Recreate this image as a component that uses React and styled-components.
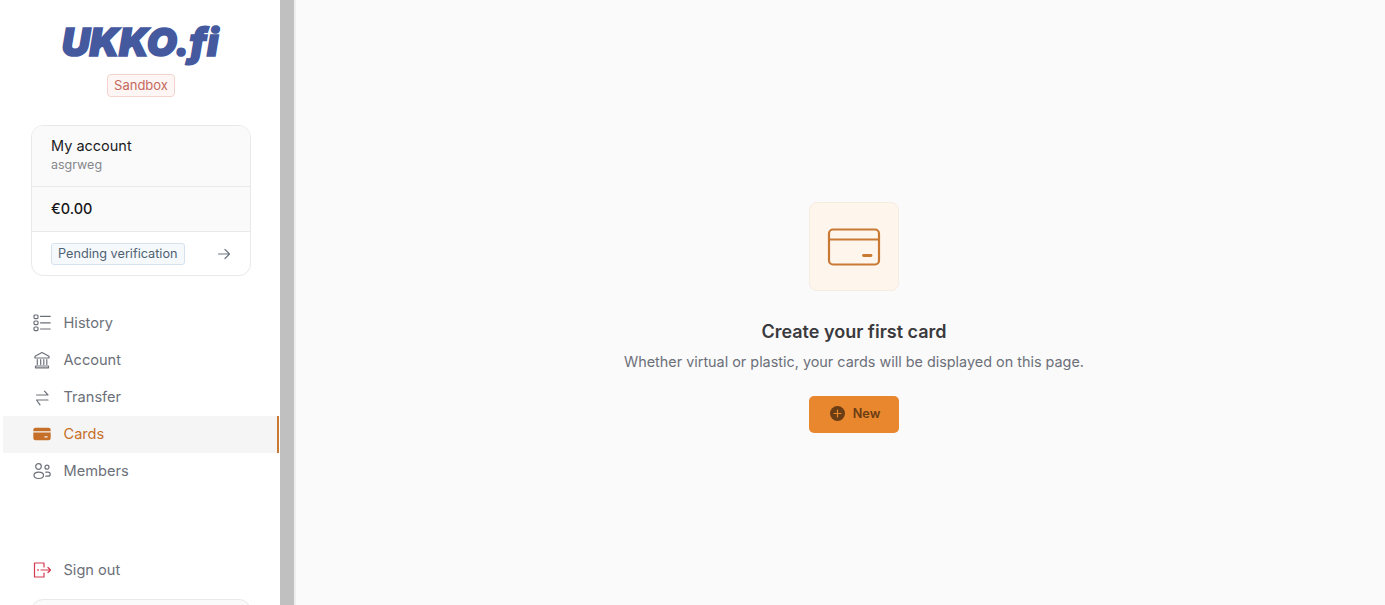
import React from 'react';
import styled, { createGlobalStyle } from 'styled-components';

const Global = createGlobalStyle`
  html, body { margin: 0; height: 100%; overflow: hidden; background: #fafafa; }
  body { font-family: Inter, "Liberation Sans", sans-serif; }
  #root { height: 100%; }
`;

const navItems = [
  { label: 'History', icon: <HistoryIcon /> },
  { label: 'Account', icon: <BankIcon /> },
  { label: 'Transfer', icon: <TransferIcon /> },
  { label: 'Cards', icon: <CardFillIcon />, active: true },
  { label: 'Members', icon: <MembersIcon /> },
];

function Svg({ children, size = 18, color = 'currentColor' }) {
  return (
    <svg width={size} height={size} viewBox="0 0 18 18" fill="none" stroke={color} strokeWidth="1.2" strokeLinecap="round" strokeLinejoin="round">
      {children}
    </svg>
  );
}

function HistoryIcon() {
  return (
    <Svg>
      <rect x="1" y="1" width="4" height="3.6" rx="1" />
      <rect x="1" y="7" width="4" height="3.6" rx="1" />
      <rect x="1" y="13" width="4" height="3.6" rx="1" />
      <path d="M7.5 2.4H17.2M7.5 8.8H17.2M7.5 15H17.2" />
    </Svg>
  );
}

function BankIcon() {
  return (
    <Svg>
      <path d="M9 1.5L16 5.2V7H2V5.2L9 1.5Z" />
      <path d="M4.3 8.5V13.5M7.7 8.5V13.5M10.8 8.5V13.5M13.8 8.5V13.5" />
      <path d="M2.5 15H15.5V16.8H2.5Z" />
    </Svg>
  );
}

function TransferIcon() {
  return (
    <Svg>
      <path d="M3.5 7H15L11.5 3.2" />
      <path d="M15 12H3.5L7 16.8" />
    </Svg>
  );
}

function CardFillIcon() {
  return (
    <svg width="18" height="18" viewBox="0 0 18 18">
      <path fill="#c66f28" d="M2.5 2.8H15.5A2.2 2.2 0 0 1 17.7 5V6.3H0.3V5A2.2 2.2 0 0 1 2.5 2.8Z" />
      <path fill="#c66f28" fillRule="evenodd" d="M0.3 7.6H17.7V13A2.2 2.2 0 0 1 15.5 15.2H2.5A2.2 2.2 0 0 1 0.3 13ZM11.5 11.2V12.4H14.5V11.2Z" />
    </svg>
  );
}

function MembersIcon() {
  return (
    <Svg>
      <circle cx="5.5" cy="4.5" r="2.8" />
      <circle cx="14" cy="5.2" r="2" />
      <path d="M5.8 10.2C3 10.2 1 11.4 1 13.3C1 15.2 3 16.5 5.8 16.5C8.6 16.5 10.5 15.2 10.5 13.3C10.5 11.4 8.6 10.2 5.8 10.2Z" />
      <path d="M12.8 10.2H14.8C16.3 10.2 17.2 11 17.2 12.2C17.2 13.4 16.3 14.2 14.8 14.2H12.8" />
    </Svg>
  );
}

function SignOutIcon() {
  return (
    <Svg color="#d6394f">
      <path d="M11 6V2H1.5V16H11V12" />
      <path d="M8 9H17.5M15 6.5L17.5 9L15 11.5" />
      <path d="M5 8.5V9.5" />
    </Svg>
  );
}

function ArrowIcon() {
  return (
    <svg width="14" height="14" viewBox="0 0 14 14" fill="none" stroke="#6f7680" strokeWidth="1.2" strokeLinecap="round" strokeLinejoin="round">
      <path d="M1.5 7H12.5M8 2.5L12.5 7L8 11.5" />
    </svg>
  );
}

export default function App() {
  return (
    <Page>
      <Global />
      <Sidebar>
        <Logo>UKKO.fi</Logo>
        <SandboxBadge>Sandbox</SandboxBadge>
        <AccountCard>
          <AccountHead>
            <AccountName>My account</AccountName>
            <AccountSub>asgrweg</AccountSub>
          </AccountHead>
          <Balance>€0.00</Balance>
          <StatusRow>
            <StatusBadge>Pending verification</StatusBadge>
            <ArrowIcon />
          </StatusRow>
        </AccountCard>
        <Nav>
          {navItems.map(item => (
            <NavItem key={item.label} active={item.active}>
              <IconSlot>{item.icon}</IconSlot>
              {item.label}
            </NavItem>
          ))}
        </Nav>
        <SignOut>
          <IconSlot><SignOutIcon /></IconSlot>
          Sign out
        </SignOut>
        <FooterCard />
      </Sidebar>
      <Divider />
      <Main>
        <IconTile>
          <svg width="54" height="38" viewBox="0 0 54 38" fill="none" stroke="#c87a35" strokeWidth="2.2" strokeLinecap="round" strokeLinejoin="round">
            <rect x="2" y="1.5" width="50" height="35" rx="4" />
            <path d="M2 11.5H52" />
            <path d="M36.5 27.5H44" strokeWidth="2.8" />
          </svg>
        </IconTile>
        <Title>Create your first card</Title>
        <Subtitle>Whether virtual or plastic, your cards will be displayed on this page.</Subtitle>
        <NewButton>
          <PlusCircle>
            <svg width="15" height="15" viewBox="0 0 15 15">
              <circle cx="7.5" cy="7.5" r="7.5" fill="#6b3d14" />
              <path d="M7.5 4V11M4 7.5H11" stroke="#e8872e" strokeWidth="1.2" strokeLinecap="round" />
            </svg>
          </PlusCircle>
          New
        </NewButton>
      </Main>
    </Page>
  );
}

const Page = styled.div`
  display: flex;
  height: 605px;
  overflow: hidden;
`;

const Sidebar = styled.aside`
  width: 280px;
  flex-shrink: 0;
  height: 605px;
  background: #fff;
  display: flex;
  flex-direction: column;
  align-items: center;
  overflow: hidden;

  & > * {
    flex-shrink: 0;
  }
`;

const Logo = styled.div`
  margin-top: 19px;
  height: 46px;
  font-family: Inter, "Liberation Sans", sans-serif;
  font-size: 39px;
  line-height: 46px;
  font-weight: 900;
  font-style: italic;
  letter-spacing: -0.2px;
  color: #45599f;
  -webkit-text-stroke: 1.6px #45599f;
`;

const SandboxBadge = styled.div`
  margin-top: 9px;
  margin-left: 1px;
  box-sizing: border-box;
  height: 23px;
  width: 68px;
  padding: 0 0 2px 1px;
  display: flex;
  align-items: center;
  justify-content: center;
  border: 1px solid #f3d3cc;
  border-radius: 4px;
  background: #fdf6f4;
  color: #c5695c;
  font-size: 13px;
`;

const AccountCard = styled.div`
  margin-top: 28px;
  margin-left: 2px;
  box-sizing: border-box;
  width: 220px;
  height: 151px;
  border: 1px solid #e9e9ea;
  border-radius: 12px;
  overflow: hidden;
  display: flex;
  flex-direction: column;
`;

const AccountHead = styled.div`
  height: 61px;
  box-sizing: border-box;
  padding: 11px 19px 0;
  background: #fafafa;
  border-bottom: 1px solid #e9e9ea;
`;

const AccountName = styled.div`
  font-size: 14.5px;
  line-height: 18px;
  color: #1c1c1f;
`;

const AccountSub = styled.div`
  font-size: 12.5px;
  line-height: 20px;
  color: #85878c;
`;

const Balance = styled.div`
  height: 45px;
  box-sizing: border-box;
  padding: 0 19px 2px;
  display: flex;
  align-items: center;
  background: #fafafa;
  border-bottom: 1px solid #e9e9ea;
  font-size: 14.5px;
  font-weight: 500;
  color: #17171a;
`;

const StatusRow = styled.div`
  flex: 1;
  display: flex;
  align-items: center;
  justify-content: space-between;
  padding: 0 19px;
`;

const StatusBadge = styled.div`
  box-sizing: border-box;
  height: 22px;
  padding: 0 6px;
  display: flex;
  align-items: center;
  border: 1px solid #d5e2ee;
  border-radius: 3px;
  background: #f5f9fc;
  color: #4f6172;
  font-size: 12.7px;
`;

const Nav = styled.nav`
  margin-top: 29px;
  align-self: stretch;
  display: flex;
  flex-direction: column;
`;

const NavItem = styled.div`
  height: 37px;
  margin-left: 3px;
  margin-right: 1px;
  box-sizing: border-box;
  padding: 0 0 2px 30px;
  display: flex;
  align-items: center;
  gap: 12.5px;
  font-size: 14.6px;
  color: ${({ active }) => (active ? '#c66f28' : '#6c7079')};
  background: ${({ active }) => (active ? '#f5f5f5' : 'transparent')};
  border-right: 2px solid ${({ active }) => (active ? '#c87a35' : 'transparent')};
`;

const IconSlot = styled.span`
  width: 18px;
  height: 18px;
  display: flex;
`;

const SignOut = styled(NavItem)`
  margin-top: 62px;
  align-self: stretch;
`;

const FooterCard = styled.div`
  margin-top: 10px;
  margin-left: 2px;
  box-sizing: border-box;
  width: 220px;
  height: 60px;
  border: 1px solid #e9e9ea;
  border-radius: 12px;
  background: #fafafa;
`;

const Divider = styled.div`
  width: 16px;
  box-sizing: border-box;
  flex-shrink: 0;
  background: #c0c0c0;
  border-right: 2px solid #eeeeee;
`;

const Main = styled.main`
  flex: 1;
  box-sizing: border-box;
  padding: 202px 0 0 27px;
  background: #fafafa;
  display: flex;
  flex-direction: column;
  align-items: center;
`;

const IconTile = styled.div`
  box-sizing: border-box;
  width: 90px;
  height: 89px;
  display: flex;
  align-items: center;
  justify-content: center;
  background: #fef5ed;
  border: 1px solid #f8ebdf;
  border-radius: 8px;
`;

const Title = styled.h1`
  margin: 28px 0 0;
  font-size: 18px;
  line-height: 26px;
  font-weight: 600;
  color: #3a3a3e;
`;

const Subtitle = styled.p`
  margin: 6px 0 0;
  font-size: 14.4px;
  line-height: 22px;
  color: #6c7079;
`;

const NewButton = styled.button`
  margin-top: 23px;
  width: 90px;
  height: 37px;
  padding: 0 0 2px 2px;
  border: none;
  border-radius: 5px;
  background: #e8872e;
  color: #6b3d14;
  font-family: inherit;
  font-size: 12.7px;
  font-weight: 600;
  display: flex;
  align-items: center;
  justify-content: center;
  gap: 8px;
`;

const PlusCircle = styled.span`
  display: flex;
`;
